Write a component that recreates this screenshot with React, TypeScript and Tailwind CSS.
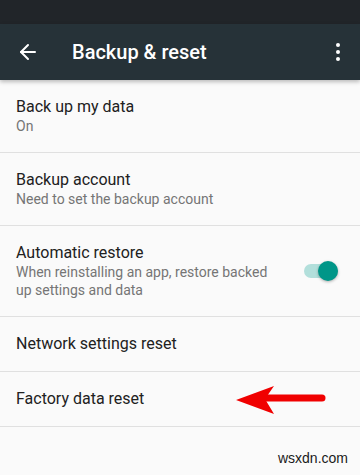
import { ArrowLeft } from 'lucide-react';

const items = [
  { title: 'Back up my data', summary: 'On' },
  { title: 'Backup account', summary: 'Need to set the backup account' },
  { title: 'Automatic restore', summary: 'When reinstalling an app, restore backed up settings and data', toggle: true },
  { title: 'Network settings reset' },
  { title: 'Factory data reset', arrow: true },
];

const App = () => {
  return (
    <div className="relative w-[360px] h-[475px] overflow-hidden bg-[#fafafa] font-['Roboto',sans-serif]">
      {/* Status bar */}
      <div className="h-6 bg-[#212529]" />

      {/* Toolbar */}
      <div className="relative z-10 h-14 bg-[#263238] flex items-center shadow-[0_2px_4px_rgba(0,0,0,0.25)]">
        <div className="w-[72px] pl-4 flex items-center">
          <ArrowLeft className="w-6 h-6 text-white" strokeWidth={2} />
        </div>
        <h1 className="flex-1 text-white text-[20px] font-medium leading-none">Backup &amp; reset</h1>
        <div className="w-11 flex flex-col items-center gap-[3px]">
          <span className="w-1 h-1 rounded-full bg-white" />
          <span className="w-1 h-1 rounded-full bg-white" />
          <span className="w-1 h-1 rounded-full bg-white" />
        </div>
      </div>

      {/* List */}
      <div>
        {items.map((item) => (
          <div key={item.title} className="relative flex items-center border-b border-[#e0e0e0] pl-4 pr-5 py-[17px]">
            <div className="flex-1 pr-4">
              <div className="text-[16px] leading-5 text-[#212121]">{item.title}</div>
              {item.summary && (
                <div className="text-[14px] leading-[18px] text-[#757575] max-w-[260px]">{item.summary}</div>
              )}
            </div>
            {item.toggle && (
              <div className="relative w-[34px] h-5 flex items-center mr-[2px]">
                <div className="w-full h-[14px] rounded-full bg-[#b2dfdb]" />
                <div className="absolute right-0 w-5 h-5 rounded-full bg-[#009688] shadow-[0_1px_3px_rgba(0,0,0,0.3)]" />
              </div>
            )}
            {item.arrow && (
              <svg className="absolute left-[234px] top-[13px]" width="94" height="30" viewBox="0 0 94 30">
                <path d="M30 13 L88 13" stroke="#f00000" strokeWidth="7" strokeLinecap="round" />
                <path d="M2 15 L40 1 L31 14 L40 29 Z" fill="#f00000" />
              </svg>
            )}
          </div>
        ))}
      </div>

      <div className="absolute right-3 bottom-[6px] text-[14px] text-[#1a1a1a] font-['Liberation_Sans',sans-serif]">wsxdn.com</div>
    </div>
  );
};

export default App;
